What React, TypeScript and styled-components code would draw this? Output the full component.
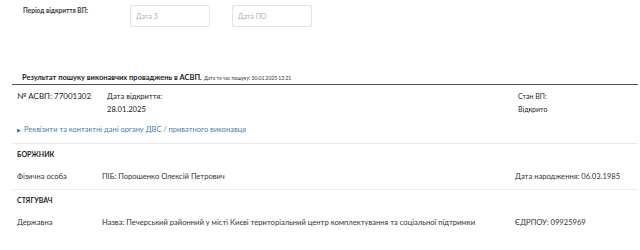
import { FC } from 'react';
import styled, { createGlobalStyle } from 'styled-components';

const GlobalStyle = createGlobalStyle`
  body {
    margin: 0;
    background: #fff;
    font-family: Lato, "Noto Sans", sans-serif;
    color: #2b2b2b;
  }
`;

const Page = styled.div`
  width: 640px;
  height: 250px;
  overflow: hidden;
  padding: 0 2px 0 12px;
  box-sizing: border-box;
`;

const FilterRow = styled.div`
  display: flex;
  align-items: flex-start;
  padding: 5px 0 0 11px;
  height: 27px;
  box-sizing: border-box;
`;

const FilterLabel = styled.div`
  width: 107px;
  font-size: 6.5px;
  font-weight: 700;
  color: #3a3a3a;
  padding-top: 2px;
`;

const DateInput = styled.input`
  width: 80px;
  height: 22px;
  box-sizing: border-box;
  border: 1px solid #e3e3e3;
  border-radius: 2px;
  margin-right: 22px;
  padding: 0 5px;
  font-family: inherit;
  font-size: 7px;
  color: #333;
  outline: none;

  &::placeholder {
    color: #b0b0b0;
  }
`;

const ResultTitle = styled.div`
  margin-top: 45px;
  height: 12px;
  line-height: 12px;
  padding-left: 10px;
  border-bottom: 1.5px solid #555;
  font-size: 7.5px;
  font-weight: 700;
  color: #222;
  white-space: nowrap;
`;

const SearchStamp = styled.span`
  font-size: 5px;
  font-weight: 400;
  margin-left: 2px;
  color: #333;
`;

const InfoGrid = styled.div`
  display: grid;
  grid-template-columns: 90px 1fr 120px;
  padding: 5px 0 0 5px;
`;

const InfoCell = styled.div<{ $size?: number }>`
  font-size: ${p => p.$size ?? 8}px;
  line-height: 13px;
  font-weight: 400;
  color: #222;
`;

const DetailsLink = styled.a`
  display: block;
  margin-top: 8px;
  padding: 0 0 6.5px 5px;
  line-height: 12px;
  font-size: 7.5px;
  color: #3f7fb0;
  text-decoration: none;
  border-bottom: 1px solid #ebebeb;
`;

const Arrow = styled.span`
  font-size: 5px;
  margin-right: 3px;
  color: #2f6f9f;
`;

const SectionHeading = styled.div`
  height: 20px;
  line-height: 20px;
  padding-left: 5px;
  font-size: 7px;
  font-weight: 700;
  color: #222;
`;

const PartyRow = styled.div<{ $last?: boolean }>`
  display: grid;
  grid-template-columns: 85px 1fr 123px;
  align-items: center;
  height: 25px;
  padding-left: 5px;
  font-size: 7.6px;
  color: #333;
  border-bottom: ${p => (p.$last ? 'none' : '1px solid #ebebeb')};
  white-space: nowrap;
`;

interface Party {
  heading: string;
  kind: string;
  main: string;
  side: string;
}

const parties: Party[] = [
  {
    heading: 'БОРЖНИК',
    kind: 'Фізична особа',
    main: 'ПІБ: Порошенко Олексій Петрович',
    side: 'Дата народження: 06.03.1985',
  },
  {
    heading: 'СТЯГУВАЧ',
    kind: 'Державна',
    main: 'Назва: Печерський районний у місті Києві територіальний центр комплектування та соціальної підтримки',
    side: 'ЄДРПОУ: 09925969',
  },
];

const App: FC = () => (
  <Page>
    <GlobalStyle />
    <FilterRow>
      <FilterLabel>Період відкриття ВП:</FilterLabel>
      <DateInput placeholder="Дата З" />
      <DateInput placeholder="Дата ПО" />
    </FilterRow>

    <ResultTitle>
      Результат пошуку виконавчих проваджень в АСВП.
      <SearchStamp>Дата та час пошуку: 30.01.2025 12:21</SearchStamp>
    </ResultTitle>

    <InfoGrid>
      <InfoCell>№ АСВП: 77001302</InfoCell>
      <InfoCell $size={7.6}>
        Дата відкриття:
        <br />
        28.01.2025
      </InfoCell>
      <InfoCell $size={7}>
        Стан ВП:
        <br />
        Відкрито
      </InfoCell>
    </InfoGrid>

    <DetailsLink href="#">
      <Arrow>▶</Arrow>Реквізити та контактні дані органу ДВС / приватного виконавця
    </DetailsLink>

    {parties.map((p, i) => (
      <div key={p.heading}>
        <SectionHeading>{p.heading}</SectionHeading>
        <PartyRow $last={i === parties.length - 1}>
          <span>{p.kind}</span>
          <span>{p.main}</span>
          <span>{p.side}</span>
        </PartyRow>
      </div>
    ))}
  </Page>
);

export default App;
